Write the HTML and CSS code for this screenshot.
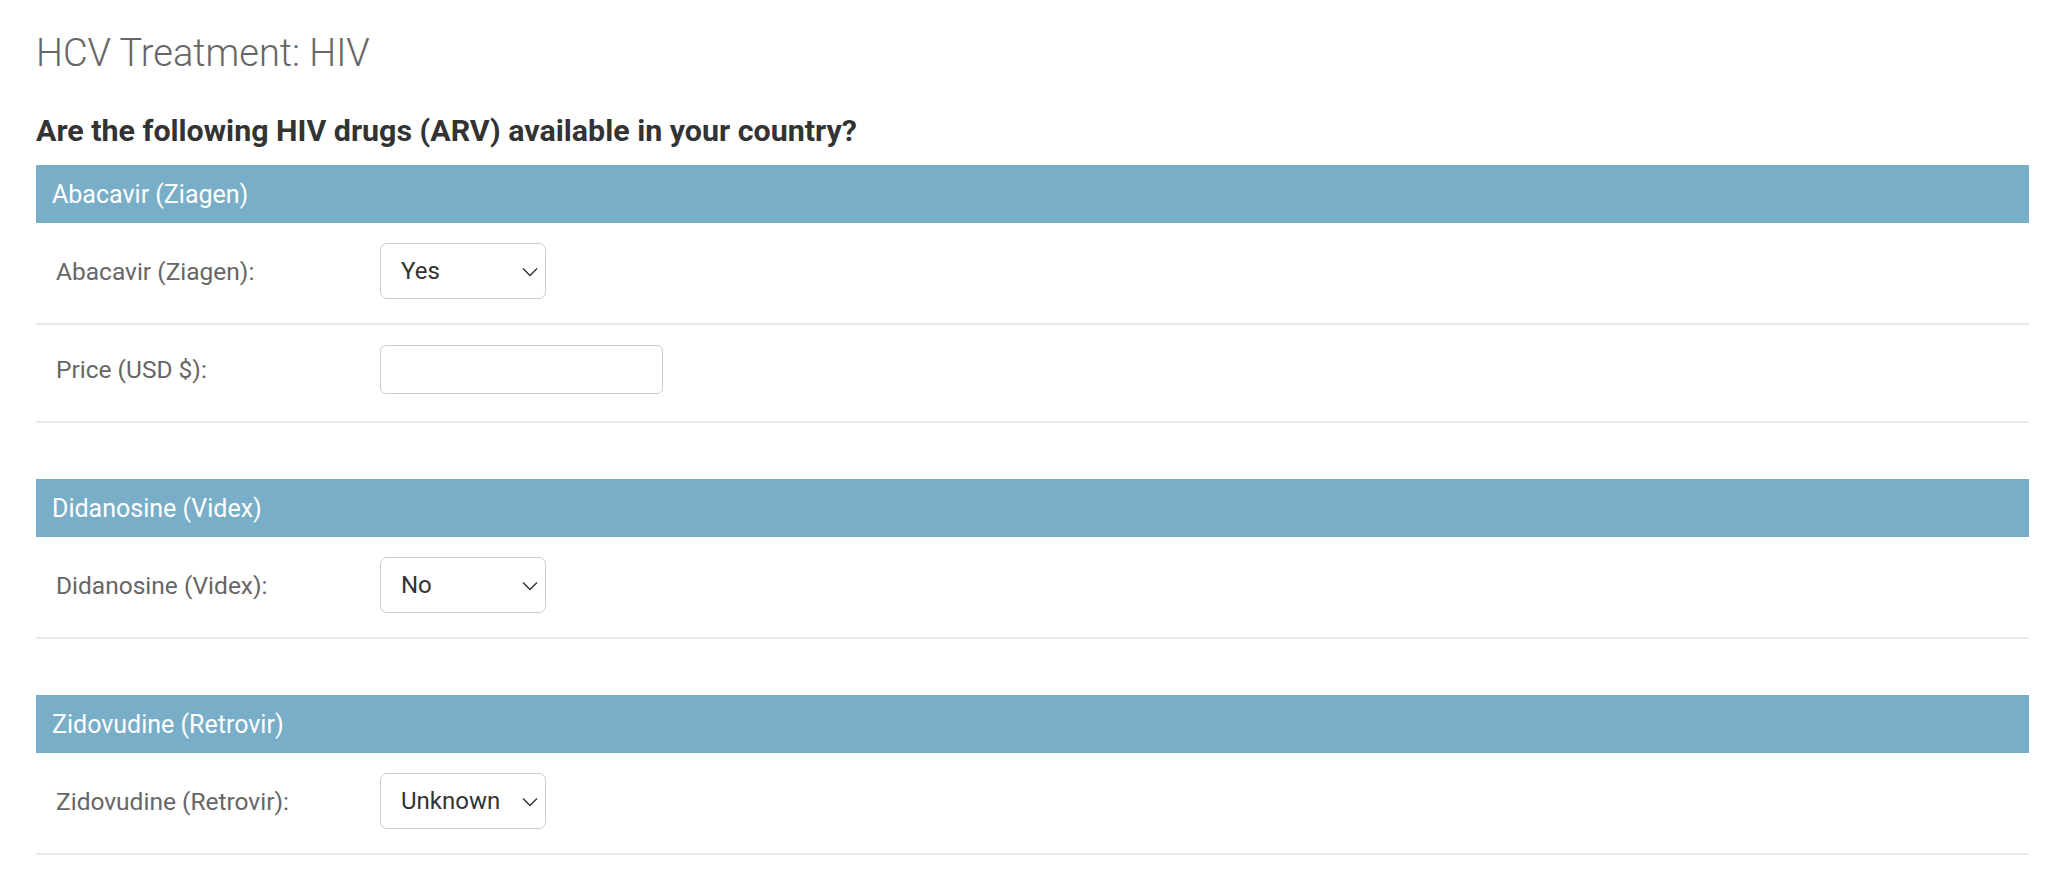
FILE: index.html
```html
<!DOCTYPE html>
<html lang="en">
<head>
<meta charset="utf-8">
<title>HCV Treatment: HIV</title>
<link rel="stylesheet" href="styles.css">
</head>
<body>
<main class="page">
  <h1 class="page-title">HCV Treatment: HIV</h1>
  <h2 class="question">Are the following HIV drugs (ARV) available in your country?</h2>

  <section class="module">
    <h3 class="module-head">Abacavir (Ziagen)</h3>
    <div class="form-row">
      <label class="field-label">Abacavir (Ziagen):</label>
      <div class="select-wrap">
        <select class="select"><option>Yes</option><option>No</option><option>Unknown</option></select>
        <svg class="chevron" width="16" height="10" viewBox="0 0 16 10"><path d="M1 1.5 L8 8.5 L15 1.5" fill="none" stroke="#333" stroke-width="1.4"/></svg>
      </div>
    </div>
    <div class="form-row form-row--input">
      <label class="field-label">Price (USD $):</label>
      <input class="text-input" type="text">
    </div>
  </section>

  <section class="module">
    <h3 class="module-head">Didanosine (Videx)</h3>
    <div class="form-row">
      <label class="field-label">Didanosine (Videx):</label>
      <div class="select-wrap">
        <select class="select"><option>No</option><option>Yes</option><option>Unknown</option></select>
        <svg class="chevron" width="16" height="10" viewBox="0 0 16 10"><path d="M1 1.5 L8 8.5 L15 1.5" fill="none" stroke="#333" stroke-width="1.4"/></svg>
      </div>
    </div>
  </section>

  <section class="module module--last">
    <h3 class="module-head">Zidovudine (Retrovir)</h3>
    <div class="form-row">
      <label class="field-label">Zidovudine (Retrovir):</label>
      <div class="select-wrap">
        <select class="select"><option>Unknown</option><option>Yes</option><option>No</option></select>
        <svg class="chevron" width="16" height="10" viewBox="0 0 16 10"><path d="M1 1.5 L8 8.5 L15 1.5" fill="none" stroke="#333" stroke-width="1.4"/></svg>
      </div>
    </div>
  </section>
</main>
</body>
</html>
```

FILE: styles.css
```css
* { box-sizing: border-box; }

html, body {
  margin: 0;
  padding: 0;
  background: #fff;
}

body {
  font-family: Roboto, "Liberation Sans", Arial, sans-serif;
  color: #333;
}

.page {
  padding: 30px 19px 0 36px;
}

.page-title {
  margin: 0;
  font-size: 38px;
  line-height: 46px;
  font-weight: 300;
  color: #666;
}

.question {
  margin: 37px 0 16px;
  font-size: 30.4px;
  line-height: 36px;
  font-weight: 700;
  color: #333;
}

.module {
  margin: 0 0 56px;
}

.module--last {
  margin-bottom: 20px;
}

.module-head {
  margin: 0;
  height: 58px;
  display: flex;
  align-items: center;
  padding: 0 16px;
  background: #79aec8;
  color: #fff;
  font-size: 25px;
  font-weight: 400;
}

.form-row {
  display: flex;
  align-items: center;
  padding: 20px 20px 24px;
  border-bottom: 2px solid #e8e8e8;
}

.form-row--input {
  padding-bottom: 27px;
}

.field-label {
  width: 324px;
  flex: none;
  font-size: 24.5px;
  color: #666;
}

.select-wrap {
  position: relative;
  width: 166px;
  height: 56px;
}

.select {
  appearance: none;
  -webkit-appearance: none;
  width: 100%;
  height: 100%;
  margin: 0;
  padding: 0 30px 0 20px;
  border: 1.5px solid #ccc;
  border-radius: 7px;
  background: #fff;
  font-family: Roboto, "Liberation Sans", Arial, sans-serif;
  font-size: 24px;
  color: #333;
}

.chevron {
  position: absolute;
  right: 8px;
  top: 24px;
  pointer-events: none;
}

.text-input {
  width: 283px;
  height: 49px;
  margin: 0;
  padding: 0 12px;
  border: 1.5px solid #ccc;
  border-radius: 6px;
  background: #fff;
  font-size: 24px;
}
```
